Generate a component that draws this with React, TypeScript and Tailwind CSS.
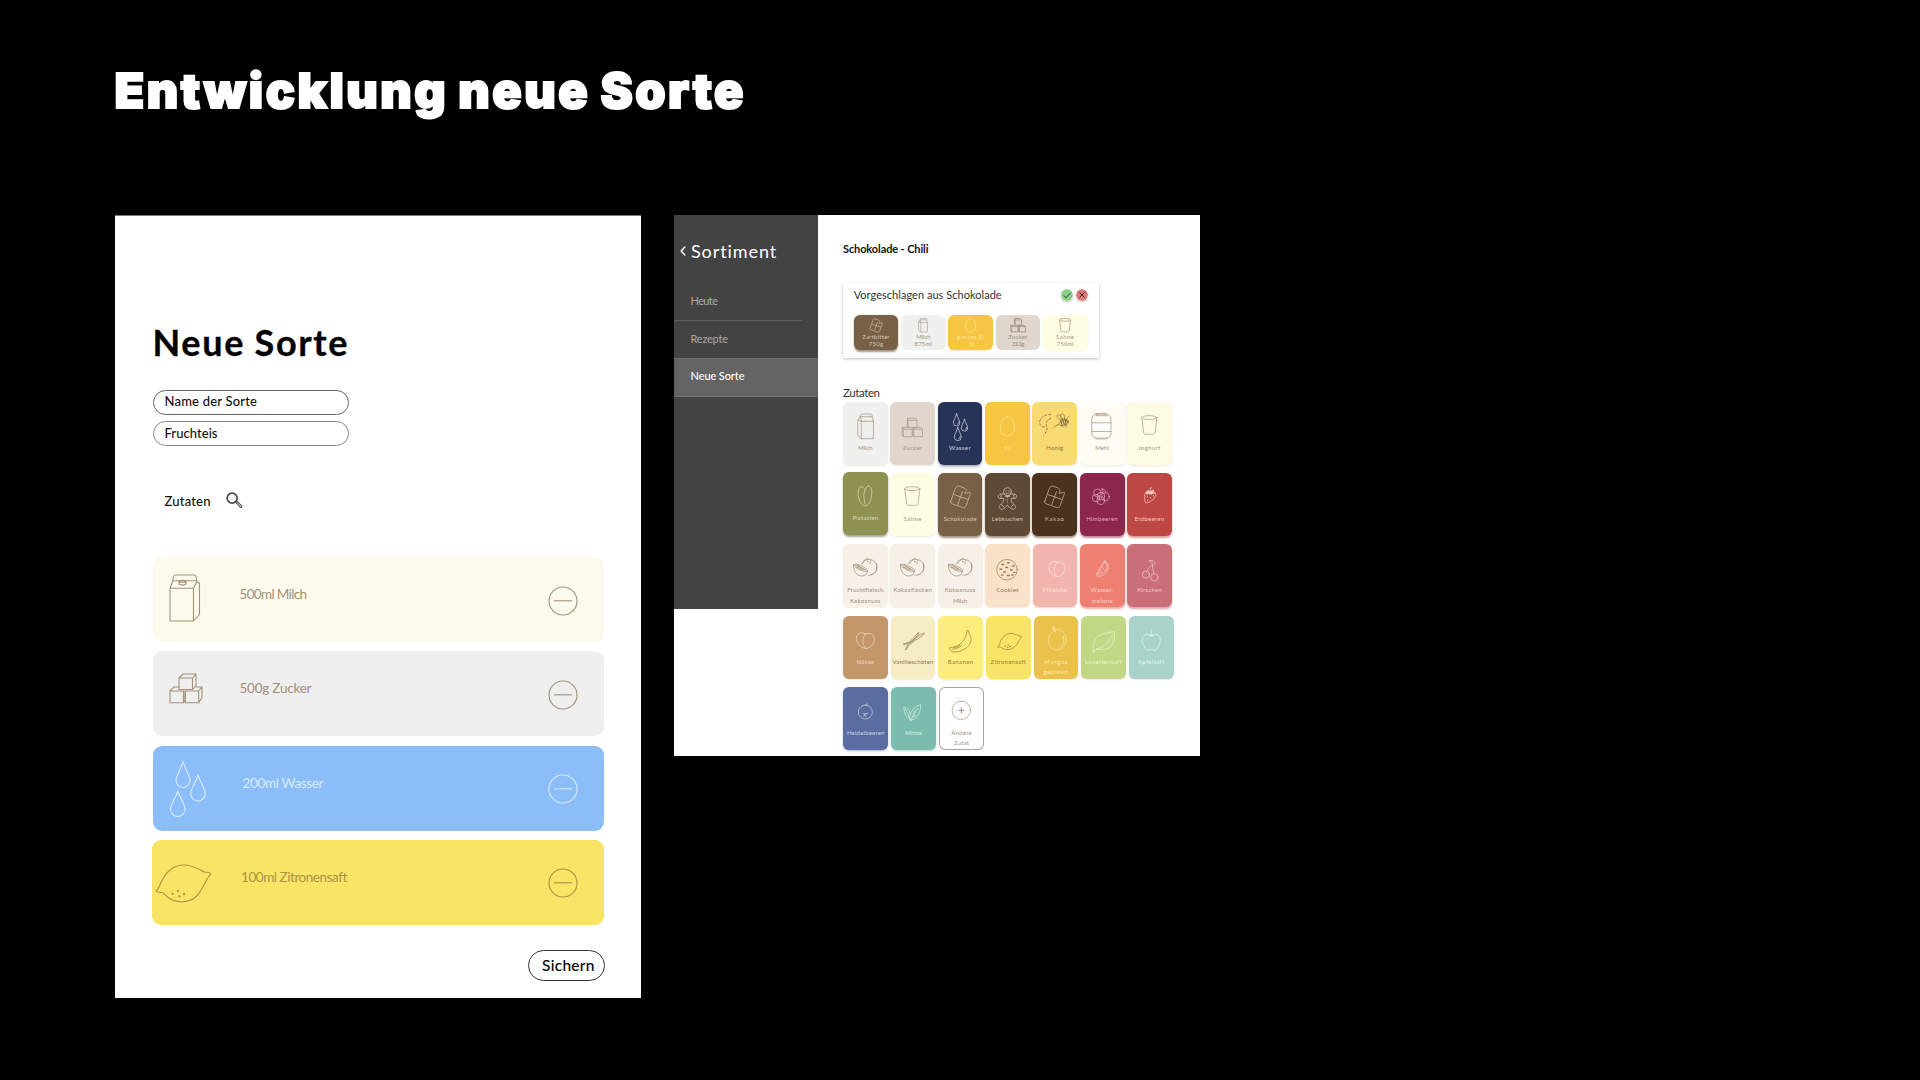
import { useLayoutEffect, useRef, useState } from 'react';
import type { ReactNode } from 'react';

/* Text whose letter spacing is tuned so that it fills the given width. */
function Fit({ w, className = '', children }: { w: number; className?: string; children: string }) {
  const ref = useRef<HTMLSpanElement>(null);
  const [spacing, setSpacing] = useState(0);
  useLayoutEffect(() => {
    if (!ref.current) return;
    const natural = ref.current.getBoundingClientRect().width;
    setSpacing((w - natural) / (children.length - 1));
  }, [w, children]);
  return (
    <span ref={ref} className={`block w-fit whitespace-nowrap leading-none ${className}`} style={{ letterSpacing: spacing }}>
      {children}
    </span>
  );
}

const drop = (cx: number, top: number, w: number, h: number) => {
  const r = w / 2;
  const cy = top + h - r;
  return `M${cx} ${top}C${cx - r * 0.3} ${top + h * 0.3} ${cx - r} ${cy - r * 0.7} ${cx - r} ${cy}a${r} ${r} 0 0 0 ${w} 0C${cx + r} ${cy - r * 0.7} ${cx + r * 0.3} ${top + h * 0.3} ${cx} ${top}z`;
};

const chocolate = (
  <>
    <path d="M12.700 28.500l4.600-13c.8-2 2-2.900 3.800-2.300l5 1.800c1.800.7 2.300 2 1.700 3.800l-.6 1.700 4.700-1.200c.7 0 .8.500.5 1.400l-4.200 11.800c-.7 1.900-1.900 2.500-3.700 1.900l-9.800-3.400c-1.800-.6-2.500-1.300-2-2.500z" />
    <path d="M15.700 21.500l13.800 4.800M24.500 18.500l-4.700 13" />
  </>
);
const coconut = (
  <>
    <path d="M19 19.500a8 8 0 1 1 6.500 11.800M19.200 19.500c.8-3 3.300-4.900 6.300-4.900" />
    <path d="M33.300 19.500c1.600 4 .3 9-5 11.300" />
    <path d="M10.600 20.500c2.500-2 13.700 3.200 14.200 6.600-3.500 1.500-14.200-3-14.200-6.600z" />
    <path d="M12.500 21.200l9 4.500M13 22.800l7 3.200M14.500 21.200l8.500 5" />
    <path d="M10.600 21c-.5 6 3.200 11 8 11 3.500 0 5.500-2 6-5" />
    <path d="M24.500 17.500h.6M27.500 17h.6M26.500 19h.5" strokeWidth="1" />
  </>
);
const cup = (
  <>
    <ellipse cx="22.300" cy="15.600" rx="7.600" ry="1.900" />
    <path d="M14.700 15.800l2 14.700c.2 1.200 1 1.800 2.200 1.800h7c1.200 0 2-.6 2.200-1.800l1.800-14.700" />
  </>
);

const icons: Record<string, ReactNode> = {
  milk: (
    <>
      <path d="M18.600 19.300h11.800v17.400H18.600zM18.600 36.700l-3.900-3V18.200l2.600-3.500 1.300 4.600M17.300 14.700h11.800l1.300 4.600M14.700 18.200l3.900 1.100" />
      <path d="M17.300 14.700c-.2-2 .4-2.700 2-2.700h8.200c1.500 0 2 .9 1.600 2.700" />
    </>
  ),
  sugar: (
    <>
      <path d="M18.400 18.200H27v7.300h-8.600zM18.400 18.200l-1-2h8.300l1.300 2M17.400 16.200v7.600l1 1.700" />
      <path d="M13.700 27.300h8.500v7.400h-8.500zM13.700 27.300l-1.500-1.800h5.500M12.200 25.500V33l1.500 1.700" />
      <path d="M24.200 27.300h8.300v7.400h-8.300zM24.200 27.300l-1.300-1.800h7.800l1.800 1.800M22.900 25.500V33l1.300 1.700" />
    </>
  ),
  water: (
    <>
      <path d={drop(18.600, 11.800, 6.400, 12.200)} />
      <path d={drop(26.500, 17.200, 6.400, 12)} />
      <path d={drop(19.800, 25.400, 7, 13.200)} />
      <path d="M19.400 22c1-.3 1.500-1 1.500-2M27.300 27.300c1-.3 1.500-1 1.500-2M20.600 36.600c1.200-.3 1.700-1.200 1.700-2.200" />
    </>
  ),
  egg: <path d="M22.500 15c3.800 0 7 5.300 7 10.200s-3 8.800-7 8.800-7-3.900-7-8.800S18.700 15 22.500 15z" />,
  honey: (
    <>
      <path d="M18.500 12.300c-5 .2-10.300 3-10.800 7.500-.3 4 3 6.500 6.500 4.500M18.500 16.500c-4 1.500-5.500 5-3.500 8 .5 3-1 6-3.500 9" strokeDasharray="1.800 2.200" strokeWidth="1" />
      <path d="M26 22.700c2-3 5.500-5.500 9.500-5.500 2 2 1 4.500-1 5.500-3 1.300-6 1-8.500 0zM26 22.700l-4 2M35.500 15.500l1.500-1M33.500 23.500l1 1.500M30 23.500l.5 1.500" />
      <path d="M28.500 18.200l1.500 5M30.500 17l2 6M32.700 16.700l1.500 5.700M34 17.500l2 3" strokeWidth="1.300" />
      <path d="M29.500 18c-4-1-5.500-3.500-4-5 2-1 4 1.500 4.500 4.500M30 17c-2.500-3-1.500-5.500.5-5.300 2 .5 2.500 3 1.500 5.300" />
    </>
  ),
  jar: (
    <>
      <path d="M11.800 20.800H31v8.700H11.800z" fill="white" stroke="none" />
      <rect x="11.800" y="12.300" width="19.200" height="23.800" rx="4.500" />
      <path d="M15.500 12.700c.2-1 .8-1.400 2-1.400h8c1.200 0 1.700.5 1.800 1.400M15.500 35.900c.2.800.8 1.100 2 1.100h8c1.200 0 1.700-.3 1.800-1.100M16 13.700h11" />
      <path d="M11.800 20.800H31M11.800 29.500H31" />
    </>
  ),
  cup,
  pistachio: (
    <>
      <path d="M21.500 17c-1.500-3.500-4.500-3-5.700 0-1.800 5 0 13 4.500 16.500 1 .7 2 .5 2.500 0" />
      <path d="M25.500 14c-3.500 0-5 7-4.500 12 .3 4 1.300 7.500 2.500 7.500 3 0 5.500-8 5.300-14-.2-3.500-1.300-5.500-3.300-5.500z" />
    </>
  ),
  chocolate,
  ginger: (
    <>
      <circle cx="22.400" cy="18.600" r="3.900" />
      <path d="M19.300 21l-4.400.2c-2.300.4-2.300 4 .2 4.300l3.500-.2c.2 2 0 3.200-1 4.500l-3 2.700c-1.500 2 1 4.500 3.400 3.500 2.500-1.300 3-2 4.400-4 1.400 2 2 2.700 4.400 4 2.400 1 5-1.500 3.400-3.500l-3-2.700c-1-1.300-1.200-2.500-1-4.500l3.500.2c2.500-.3 2.500-3.900.2-4.300l-4.400-.2" />
      <path d="M20.800 18h.6M23.500 18h.6M20.900 20.200q1.500 1 3 0M22.400 24v.6M22.400 26.500v.6M22.400 29v.6M20.500 22.700l4 1M24.500 22.700l-4 1M16 21.500v3.700M29 21.500v3.700M16.500 31.500l2.500 2.500M28.500 31.500L26 34" />
    </>
  ),
  raspberry: (
    <>
      <circle cx="17.300" cy="19.800" r="3.700" />
      <circle cx="25.300" cy="23.600" r="3.900" />
      <circle cx="16" cy="25" r="3.700" />
      <circle cx="20.800" cy="27.600" r="4" />
      <circle cx="20.800" cy="23.200" r="3.800" />
      <path d="M20.500 17.500c1-1.500 2.500-1.700 4-.7 1 .8 1.500 1.800 1.500 3M23 19.500c0-2-.3-3-1.200-4" />
    </>
  ),
  strawberry: (
    <>
      <path d="M18.500 20c-1.800 2.500-1.200 8 .3 10 4.500-.5 9-4 10-7.500.5-2.500-1.500-4-3.500-4-2.500-.7-5.300-.3-6.800 1.500z" />
      <path d="M19 19.500l2-2.500 2 1.700 3.500-2-.5 2.500 2.500 1-3.500.5-1 1-1.500-1-2.500.5zM23.500 17.500l-.5-2.500 1.500-.5" fill="currentColor" strokeWidth="0.400" />
      <path d="M20.500 23.500v.8M23.500 24.500v.8M20.500 27v.8M26.500 22.500v.8" />
    </>
  ),
  coconut,
  cookie: (
    <>
      <circle cx="22" cy="25.700" r="10.300" />
      <path d="M17 20.500h1.600M22.500 18.700h1.600M27.500 22h1.600M20.800 23.500h1.600M15 25.300h1.600M25.500 26h1.600M18.800 28h1.600M29 28.500h.8M22.500 31.500h1.600M16.700 31h1.300M26.800 31h1" strokeWidth="1.600" />
    </>
  ),
  peach: (
    <>
      <path d="M24 18.500c-4.500-3-8.500.5-8 5.500.3 4.500 3.500 8 7 8.300" />
      <path d="M24 18.500c-3 3-4 8.500-1 13.800 5 1.500 9-4 9-9-.2-4.300-4-6.700-8-4.800z" />
    </>
  ),
  melon: (
    <path d="M24.800 16.500l-8.300 13.700c-.7 1.500 0 2 1.300 2 5 .5 9.700-3 10.300-7.500.4-3.500-1-6-3.300-8.200zM24.500 18l-7 12c5 .5 9-3 9.500-6.500.2-2-.7-4-2.500-5.500zM23.500 24v.8M21.500 27.500v.8M25 26.500v.5" />
  ),
  cherry: (
    <>
      <circle cx="19" cy="30.600" r="3.600" />
      <circle cx="27.300" cy="33.300" r="3.700" />
      <path d="M19.500 27.200c1-2 3-4.500 6-6 .3 3 .5 5.500 1.500 8.500M25.500 21.200c-.5-2-1-3.700-3.500-4.700 3-.5 6 .5 6 3-.3 1-1.300 1.700-2.500 1.700z" />
    </>
  ),
  nut: (
    <>
      <path d="M22.500 18c-4-3-9.500 0-9.200 4.500.3 5.500 4.500 9.500 9.500 10" />
      <path d="M22.500 18c-2.500 2.500-4.500 9.500.5 14.500 5-.3 8.300-5 8.300-9.500-.3-4.500-4.500-7-8.800-5z" />
    </>
  ),
  vanilla: (
    <>
      <path d="M14.300 33.800c.5-3 2.500-4.800 5-7.300 4-4.200 9-8.200 14-9.500M15.500 33.500c.5-2.500 2.500-4.300 5-6.500 4.200-3.700 9.500-5.500 12.500-8.800" />
      <path d="M12.500 27.800c3.500-.8 6-1.800 8.500-4 2.500-2.500 4-5.500 6.500-7.300M12.700 28.600c4-.3 7-2 9.500-4 2.500-2.200 4-5.100 5.600-7.600" />
    </>
  ),
  banana: (
    <>
      <path d="M30.200 14.500l1.300 4c2.300 3 2 8-1 11.500-4.500 5-14 7.500-17.500 5-1.300-1-1.800-2.500-1.300-3.500 5 0 10-2 13-6 2.500-3 4-6.500 4.200-10.500z" />
      <path d="M14 33.200c3.500 0 6.500-1.200 9.500-3.700M16 31.700c2.500-.3 4-1.200 5.500-2" />
    </>
  ),
  lemon: (
    <>
      <path d="M12 31c1-1 1.500-2.500 2-4 1.500-5.500 6-10 12-9.500 3.500.3 5.500 2 7.500 2.300 1.800 0 2.300.7 1.500 1.700-2.500 3.500-3 6-6 9-3 3.500-9 4-13 1.500-1.500-1-4-.2-4-1z" />
      <path d="M19 30h.6M22 29h.6M21.500 31.500h.6M24 30.500h.6" strokeWidth="1.100" />
    </>
  ),
  mango: (
    <>
      <path d="M21 14.500c5-3.500 11 2.500 11 9 0 6-4 10.500-9 10.500s-8.700-4.500-8.500-10.500c.2-5 3.500-7 6.500-9zM21 14.500l-1-4M19.300 11l-.5 2.500 2.200 1" />
      <path d="M29 20c1.500 3.500 1 8-2.500 11" />
    </>
  ),
  lime: (
    <>
      <path d="M12.500 36c-1-6 0-12 5-16 4-3.500 11-3.500 16-4.500.2 5.500-.5 12-4.500 15.500-5 4.500-10.500 1.500-14 2.500-1 .5-1.500 1.500-2.500 2.500z" />
      <path d="M15 33.500c7-2 13.500-7 16.500-14.500" />
    </>
  ),
  apple: (
    <path d="M22.300 19.200c-4-2.500-8.800-.7-9 4.500-.2 5 3 10.300 6 10.500 1.200 0 2-.7 3-.7s2 .7 3.200.7c3-.3 6-5.700 5.700-10.500-.3-5.200-5-7-8.900-4.500zM22.300 19.200v-6M19.800 19.500q2.500 1.500 5 0" />
  ),
  blueberry: (
    <path d="M22.300 18a7 7 0 1 0 .1 0zM20.300 26.500l3 3M23.300 26.500l-3 3M21.300 27l3.200-.3M22.300 18c1 .3 2.500 0 2-1.500" />
  ),
  mint: (
    <>
      <path d="M19.500 33.500c-2-5 .5-12 10-16 .5 7-2 14-10 16zM19.500 33.500c2-4 4.500-8.500 7.500-12M23 27.500v-3.500M21.500 30l3.500-1.500" />
      <path d="M18.700 32c-4-2-6-7-5.700-12 4 1 6 3.500 6 6.500M18.700 32c-1-4-2.500-7-4.500-10" />
    </>
  ),
  plus: (
    <>
      <circle cx="22.300" cy="23.300" r="9.200" />
      <path d="M19.600 23.300H25M22.300 20.600V26" strokeWidth="1" />
    </>
  ),
};

type Tile = { icon: string; bg: string; fg: string; lines: [string, number][]; extra?: string };

const rows: Tile[][] = [
  [
    { icon: 'milk', bg: 'bg-[#f0f0ee]', fg: 'text-[#a3917c]', lines: [['Milch', 14.5]] },
    { icon: 'sugar', bg: 'bg-[#e0d6cd]', fg: 'text-[#a0958a]', lines: [['Zucker', 19.5]] },
    { icon: 'water', bg: 'bg-[#273457]', fg: 'text-[#d5dae6]', lines: [['Wasser', 21.5]] },
    { icon: 'egg', bg: 'bg-[#f5c543]', fg: 'text-[#fde592]', lines: [['Ei', 5]] },
    { icon: 'honey', bg: 'bg-[#f8da72]', fg: 'text-[#8c7240]', lines: [['Honig', 17]] },
    { icon: 'jar', bg: 'bg-[#fffcf5]', fg: 'text-[#a3917c]', lines: [['Mehl', 13.5]] },
    { icon: 'cup', bg: 'bg-[#fdfbe3]', fg: 'text-[#a3957c]', lines: [['Joghurt', 22.5]] },
  ],
  [
    { icon: 'pistachio', bg: 'bg-[#8f9153]', fg: 'text-[#dcdcba]', lines: [['Pistazien', 25.5]], extra: '-translate-y-px' },
    { icon: 'cup', bg: 'bg-[#fefce3]', fg: 'text-[#a3957c]', lines: [['Sahne', 18]] },
    { icon: 'chocolate', bg: 'bg-[#786046]', fg: 'text-[#d4c6b5]', lines: [['Schokolade', 33]] },
    { icon: 'ginger', bg: 'bg-[#5d4a35]', fg: 'text-[#d4c9bb]', lines: [['Lebkuchen', 31]] },
    { icon: 'chocolate', bg: 'bg-[#4a321c]', fg: 'text-[#c9bbab]', lines: [['Kakao', 19]] },
    { icon: 'raspberry', bg: 'bg-[#8c264c]', fg: 'text-[#e2a9bd]', lines: [['Himbeeren', 31.5]] },
    { icon: 'strawberry', bg: 'bg-[#bd4843]', fg: 'text-[#f6c9c4]', lines: [['Erdbeeren', 29.5]] },
  ],
  [
    { icon: 'coconut', bg: 'bg-[#f7f0e9]', fg: 'text-[#9d8c79]', lines: [['Fruchtfleisch', 36], ['Kokosnuss', 30.5]] },
    { icon: 'coconut', bg: 'bg-[#f7f0e9]', fg: 'text-[#9d8c79]', lines: [['Kokosflocken', 38.5]] },
    { icon: 'coconut', bg: 'bg-[#f7f0e9]', fg: 'text-[#9d8c79]', lines: [['Kokosnuss', 30.5], ['Milch', 14.5]] },
    { icon: 'cookie', bg: 'bg-[#f9e2c8]', fg: 'text-[#94785a]', lines: [['Cookies', 22.5]] },
    { icon: 'peach', bg: 'bg-[#f1b5ae]', fg: 'text-[#fbe1dd]', lines: [['Pfirsiche', 24]] },
    { icon: 'melon', bg: 'bg-[#ee8072]', fg: 'text-[#fbd3cd]', lines: [['Wasser-', 23.5], ['melone', 21]] },
    { icon: 'cherry', bg: 'bg-[#ca6e78]', fg: 'text-[#f2cacf]', lines: [['Kirschen', 24.5]] },
  ],
  [
    { icon: 'nut', bg: 'bg-[#c4976b]', fg: 'text-[#f0dcc6]', lines: [['Nüsse', 17.5]] },
    { icon: 'vanilla', bg: 'bg-[#f6edc5]', fg: 'text-[#87744f]', lines: [['Vanilleschoten', 41]] },
    { icon: 'banana', bg: 'bg-[#fbee7d]', fg: 'text-[#96803f]', lines: [['Bananen', 25.5]] },
    { icon: 'lemon', bg: 'bg-[#f9e466]', fg: 'text-[#96803f]', lines: [['Zitronensaft', 35]] },
    { icon: 'mango', bg: 'bg-[#eac14a]', fg: 'text-[#faebb0]', lines: [['Mangos', 23], ['gepresst', 24.5]] },
    { icon: 'lime', bg: 'bg-[#c1d786]', fg: 'text-[#edf6cf]', lines: [['Limettensaft', 36]] },
    { icon: 'apple', bg: 'bg-[#a9d2ca]', fg: 'text-[#e4f4f1]', lines: [['Apfelsaft', 26]] },
  ],
  [
    { icon: 'blueberry', bg: 'bg-[#5b6da0]', fg: 'text-[#c9d2ea]', lines: [['Heidelbeeren', 37.5]] },
    { icon: 'mint', bg: 'bg-[#7cbcae]', fg: 'text-[#d4efe8]', lines: [['Minze', 16.5]] },
    { icon: 'plus', bg: 'bg-white', fg: 'text-[#a39383]', lines: [['Andere', 20.5], ['Zutat', 15]], extra: 'ring-1 ring-inset ring-[#a8a29c]' },
  ],
];

const shades: Record<string, string> = {
  water: 'shadow-[0_1.5px_2px_rgba(39,52,87,0.35)]',
  pistachio: 'shadow-[0_1.5px_2px_rgba(90,95,40,0.55)]',
  chocolate: 'shadow-[0_1.5px_2px_rgba(90,60,30,0.55)]',
  ginger: 'shadow-[0_1.5px_2px_rgba(90,60,30,0.55)]',
  raspberry: 'shadow-[0_1.5px_2px_rgba(140,38,76,0.55)]',
  strawberry: 'shadow-[0_1.5px_2px_rgba(189,72,67,0.55)]',
  melon: 'shadow-[0_1.5px_2px_rgba(220,90,80,0.5)]',
  cherry: 'shadow-[0_1.5px_2px_rgba(200,90,110,0.55)]',
  peach: 'shadow-[0_1px_2px_rgba(241,150,140,0.4)]',
  blueberry: 'shadow-[0_1px_2px_rgba(91,109,160,0.5)]',
  mint: 'shadow-[0_1px_2px_rgba(124,188,174,0.6)]',
  coconut: 'shadow-[0_1px_2px_rgba(240,225,160,0.5)]',
  plus: '',
};

function TileCard({ tile }: { tile: Tile }) {
  return (
    <div
      className={`flex h-[63px] w-[44.800px] shrink-0 flex-col items-center rounded-[6px] ${tile.bg} ${tile.fg} ${tile.extra ?? ''} ${shades[tile.icon] ?? 'shadow-[0_1px_2px_rgba(160,140,90,0.2)]'}`}
    >
      <svg viewBox="0 0 44.6 40" className="h-[40px] w-[44.600px] shrink-0" fill="none" stroke="currentColor" strokeWidth="0.700" strokeLinecap="round" strokeLinejoin="round">
        {icons[tile.icon]}
      </svg>
      <div className="flex flex-col items-center gap-[4.600px] pt-[3px] text-[6px]">
        {tile.lines.map(([text, w]) => (
          <Fit key={text} w={w}>{text}</Fit>
        ))}
      </div>
    </div>
  );
}

const rowClass = [
  'gap-[2.550px]',
  'gap-[2.550px]',
  'gap-[2.600px]',
  'gap-[2.850px] pt-[0.300px]',
  'gap-[3.100px] pl-[0.400px]',
];

const suggestions = [
  { icon: 'chocolate', box: '11 12 22.5 23', size: 'w-[14px]', style: 'bg-[#786046] text-[#d4c6b5] shadow-[0_1.5px_2px_rgba(90,60,30,0.55)]', a: 'Zartbitter', aw: 27, b: '750g', bw: 14.5 },
  { icon: 'milk', box: '13.5 11.5 18 26', size: 'w-[10px]', style: 'bg-[#f0f0ee] text-[#a3917c]', a: 'Milch', aw: 14.5, b: '875ml', bw: 17.5 },
  { icon: 'egg', box: '15 14.5 15 20', size: 'w-[11px]', style: 'bg-[#f5c543] text-[#fde592] shadow-[0_1px_2px_rgba(245,197,67,0.3)]', a: 'ganzes Ei', aw: 27, b: '10', bw: 5.5 },
  { icon: 'sugar', box: '11.5 15.5 21.5 20', size: 'w-[16px]', style: 'bg-[#e0d6cd] text-[#97897a]', a: 'Zucker', aw: 19.5, b: '313g', bw: 12.5 },
  { icon: 'cup', box: '14 13 16.6 20', size: 'w-[12px]', style: 'bg-[#fefce3] text-[#a3957c] shadow-[0_1px_2px_rgba(250,240,180,0.5)]', a: 'Sahne', aw: 18, b: '750ml', bw: 17 },
];

function Minus() {
  return (
    <svg viewBox="0 0 30 30" className="mt-[28.500px] mr-[26.500px] ml-auto size-[30px] shrink-0" fill="none" stroke="currentColor">
      <circle cx="15" cy="15" r="14" strokeWidth="1.100" />
      <path d="M6 14.800h18" strokeWidth="1.100" />
    </svg>
  );
}

const ingredientRows = [
  {
    style: 'bg-[#fcfaed] text-[#a39179]', text: '500ml Milch', w: 67.5, pad: 'pl-[87px]',
    icon: (
      <>
        <path d="M17 48.200h23.500v32.800H17zM40.500 81l6-6.500V43.500l-2.500-2-3.500 6.700M17 48.200l3-7.500h24M20 40.700c0-4.500.3-5.700 2-5.700h19.500c1.500 0 2 1.200 2 5.700" transform="translate(0 -17)" />
        <path d="M26 24.500c0-1.500 7-1.500 7 0v2.700c-1 1.200-6 1.200-7 0zM26 24.500c1 1 6 1 7 0" />
      </>
    ),
  },
  {
    style: 'bg-[#efefef] text-[#a39179]', text: '500g Zucker', w: 72, pad: 'pl-[87px]',
    icon: (
      <>
        <path d="M26 27h13.500v11.500H26zM26 27l4-4h13l-3.500 4M43 23v11.500l-3.500 4" />
        <path d="M17 40h13.500v11.700H17zM17 40l4-4h5M30.500 51.700l1.500-1.500V40" />
        <path d="M32.300 40h13.400v11.700H32.300zM45.700 40l3.300-4h-6M49 36v10.500l-3.300 5.200" />
      </>
    ),
  },
  {
    style: 'bg-[#8bbef8] text-[#d9eafc]', text: '200ml Wasser', w: 81, pad: 'pl-[90px]',
    icon: (
      <>
        <path d={drop(30, 15.500, 14, 26)} />
        <path d={drop(45, 29, 14.500, 26)} />
        <path d={drop(24.800, 45, 14.500, 25.500)} />
      </>
    ),
  },
  {
    style: 'bg-[#f9e466] text-[#a99344] -ml-[0.500px]', text: '100ml Zitronensaft', w: 106, pad: 'pl-[89px]',
    icon: (
      <>
        <path d="M4.300 50.500c2.500-1.500 3-4 4.500-7.500C14 31.500 22 25 32 25c8.500 0 14.500 4 20.500 7 2.500.5 5.500-.5 6 2-.3 2-3 3.500-4 6-3.500 7-6.500 14-12 18-8 5.500-19 4.500-26.500-.5-2.500-1.700-3.500-4.500-6-5-2-.5-6.500 0-5.700-2z" />
        <path d="M26 51.200h.1M20.500 53.800h.1M32 54h.1M27.300 56.300h.1" strokeWidth="2.300" />
      </>
    ),
  },
];

export default function App() {
  return (
    <main className="h-[1080px] w-[1920px] overflow-hidden bg-black pl-[115px] font-['Lato',sans-serif]">
      <header className="h-[215px] pt-[66.500px] font-['Inter',sans-serif] text-[48.500px] font-black text-white">
        <Fit w={629} className="-ml-[0.500px] [word-spacing:-2px] [-webkit-text-stroke:2px_white]">Entwicklung neue Sorte</Fit>
      </header>

      <div className="flex items-start gap-[33px]">
        <section className="h-[783px] w-[526px] border-t border-[#777] bg-white pl-[37.500px]">
          <h1 className="h-[150px] pt-[108px] text-[36px] font-bold text-black">
            <Fit w={195} className="[word-spacing:-1px] [-webkit-text-stroke:0.300px_black]">Neue Sorte</Fit>
          </h1>
          <div className="flex w-[196px] flex-col gap-[6px] text-[13px] font-medium text-[#111]">
            <div className="mt-[24px] flex h-[25px] items-start rounded-full border border-[#666] pt-[4px] pl-[11px]">
              <Fit w={92.500}>Name der Sorte</Fit>
            </div>
            <div className="flex h-[25px] items-start rounded-full border border-[#888] pt-[5px] pl-[11px]">
              <Fit w={53}>Fruchteis</Fit>
            </div>
          </div>
          <div className="mt-[44px] flex h-[24px] items-start pl-[12px] text-[13px] font-medium text-[#111]">
            <Fit w={46} className="mt-[5px]">Zutaten</Fit>
            <svg viewBox="0 0 18 18" className="mt-[2px] ml-[15px] size-[17px]" fill="none" stroke="#4a4a4a">
              <circle cx="6.500" cy="6.500" r="5.300" strokeWidth="1.800" />
              <path d="M10.300 10.600l1-1 5.300 5.200c.8.900-.5 2.200-1.400 1.400z" strokeWidth="1.100" />
            </svg>
          </div>
          <div className="mt-[43px] flex w-[451.500px] flex-col gap-[9.300px]">
            {ingredientRows.map((row) => (
              <div key={row.text} className={`relative flex h-[85px] rounded-[9px] text-[13.500px] ${row.style} ${row.pad}`}>
                <svg viewBox="0 0 75 85" className="absolute top-0 left-0 h-[85px] w-[75px]" fill="none" stroke="currentColor" strokeWidth="1.100" strokeLinejoin="round" strokeLinecap="round">
                  {row.icon}
                </svg>
                <Fit w={row.w} className="mt-[31px] self-start">{row.text}</Fit>
                <Minus />
              </div>
            ))}
          </div>
          <button className="mt-[25px] ml-[375px] flex h-[31px] w-[77px] items-start rounded-full border-[1.500px] border-[#333] pt-[7px] pl-[13.500px] text-[15.500px] font-medium text-black">
            <Fit w={52.500}>Sichern</Fit>
          </button>
        </section>

        <section className="flex h-[541px] w-[526px] items-start bg-white">
          <nav className="h-[394px] w-[144.400px] shrink-0 bg-[#434343] text-[11px] text-[#a9a9a9]">
            <div className="flex h-[67px] items-start gap-[5px] pt-[27px] pl-[6px] text-[18px] text-white">
              <svg viewBox="0 0 6 10" className="mt-[4px] h-[10px] w-[6px]" fill="none" stroke="white" strokeWidth="1.500" strokeLinecap="round" strokeLinejoin="round">
                <path d="M4.800 1L1.200 5l3.600 4" />
              </svg>
              <Fit w={85.500}>Sortiment</Fit>
            </div>
            <div className="h-[39px] w-[128px] border-b border-[#5e5e5e] pt-[12.500px] pl-[16.500px]">
              <Fit w={27.500}>Heute</Fit>
            </div>
            <div className="h-[37px] pt-[11.500px] pl-[16.500px]">
              <Fit w={37.500}>Rezepte</Fit>
            </div>
            <div className="h-[39px] border-y border-[#707070] bg-[#646464] pt-[10.500px] pl-[16.500px] font-medium text-white">
              <Fit w={54}>Neue Sorte</Fit>
            </div>
          </nav>

          <div className="pl-[24.600px]">
            <h2 className="h-[67px] pt-[28px] text-[11px] font-bold text-[#111]">
              <Fit w={85.500}>Schokolade - Chili</Fit>
            </h2>
            <div className="mt-[1px] h-[75px] w-[256px] bg-white pt-[5px] pl-[10.700px] shadow-[0_1px_3px_rgba(0,0,0,0.25)]">
              <div className="flex h-[27px] items-start text-[11px] text-[#333]">
                <Fit w={148} className="mt-[1px]">Vorgeschlagen aus Schokolade</Fit>
                <svg viewBox="0 0 12 12" className="ml-[58.800px] mt-[0.700px] size-[12px] rounded-full shadow-[0_1px_2px_rgba(0,0,0,0.25)]" fill="none" stroke="#24502a" strokeWidth="1">
                  <circle cx="6" cy="6" r="6" fill="#8ccf8a" stroke="none" />
                  <path d="M2.800 6.500l2.200 2.300 4.500-5" />
                </svg>
                <svg viewBox="0 0 12 12" className="ml-[3px] mt-[0.700px] size-[12px] rounded-full shadow-[0_1px_2px_rgba(0,0,0,0.25)]" fill="none" stroke="#5c1f22" strokeWidth="1">
                  <circle cx="6" cy="6" r="6" fill="#d97c7c" stroke="none" />
                  <path d="M3.300 3.300l5.400 5.400M8.700 3.300L3.300 8.700" />
                </svg>
              </div>
              <div className="flex gap-[2.500px]">
                {suggestions.map((s) => (
                  <div key={s.a} className={`flex h-[35px] w-[44.800px] flex-col items-center rounded-[6px] pt-[3px] text-[6px] ${s.style}`}>
                    <svg viewBox={s.box} className={`h-[14.500px] shrink-0 ${s.size}`} fill="none" stroke="currentColor" strokeWidth="1" strokeLinejoin="round">
                      {icons[s.icon]}
                    </svg>
                    <Fit w={s.aw} className="mt-[1.700px]">{s.a}</Fit>
                    <Fit w={s.bw} className="mt-[1.200px]">{s.b}</Fit>
                  </div>
                ))}
              </div>
            </div>
            <h3 className="mt-[28.600px] h-[15.400px] text-[11.500px] text-[#333]">
              <Fit w={37}>Zutaten</Fit>
            </h3>
            <div className="flex flex-col gap-[8.100px]">
              {rows.map((row, i) => (
                <div key={i} className={`flex ${rowClass[i]}`}>
                  {row.map((tile, j) => (
                    <TileCard key={j} tile={tile} />
                  ))}
                </div>
              ))}
            </div>
          </div>
        </section>
      </div>
    </main>
  );
}
